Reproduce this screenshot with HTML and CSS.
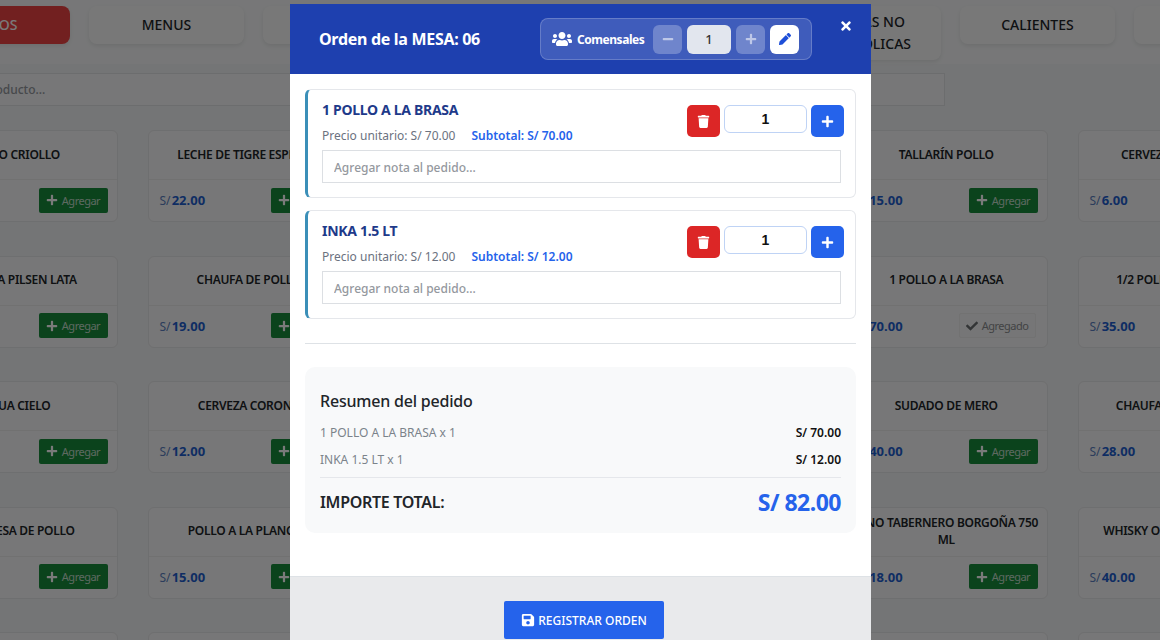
FILE: index.html
```html
<!DOCTYPE html>
<html lang="en">
<head>
    <meta charset="UTF-8">
    <meta name="viewport" content="width=device-width, initial-scale=1.0">
    <title>Orden de la mesa</title>
    <link rel="stylesheet" href="styles.css">
</head>
<body>
    <svg class="icon-defs" xmlns="http://www.w3.org/2000/svg">
        <symbol id="i-plus" viewBox="0 0 448 512"><path d="M416 208H272V64c0-17.67-14.33-32-32-32h-32c-17.67 0-32 14.33-32 32v144H32c-17.67 0-32 14.33-32 32v32c0 17.67 14.33 32 32 32h144v144c0 17.67 14.33 32 32 32h32c17.67 0 32-14.33 32-32V304h144c17.67 0 32-14.33 32-32v-32c0-17.67-14.33-32-32-32z"/></symbol>
        <symbol id="i-minus" viewBox="0 0 448 512"><path d="M416 208H32c-17.67 0-32 14.33-32 32v32c0 17.67 14.33 32 32 32h384c17.67 0 32-14.33 32-32v-32c0-17.67-14.33-32-32-32z"/></symbol>
        <symbol id="i-check" viewBox="0 0 512 512"><path d="M173.898 439.404l-166.400-166.400c-9.997-9.997-9.997-26.206 0-36.204l36.203-36.204c9.997-9.998 26.207-9.998 36.204 0L192 312.690 432.095 72.596c9.997-9.997 26.207-9.997 36.204 0l36.203 36.204c9.997 9.997 9.997 26.206 0 36.204l-294.400 294.401c-9.998 9.997-26.207 9.997-36.204-.001z"/></symbol>
        <symbol id="i-trash" viewBox="0 0 448 512"><path d="M432 32H312l-9.400-18.700A24 24 0 0 0 281.100 0H166.800a23.720 23.720 0 0 0-21.400 13.300L136 32H16A16 16 0 0 0 0 48v32a16 16 0 0 0 16 16h416a16 16 0 0 0 16-16V48a16 16 0 0 0-16-16zM53.200 467a48 48 0 0 0 47.900 45h245.800a48 48 0 0 0 47.900-45L416 128H32z"/></symbol>
        <symbol id="i-times" viewBox="0 0 352 512"><path d="M242.720 256l100.070-100.070c12.280-12.280 12.280-32.190 0-44.480l-22.240-22.240c-12.280-12.280-32.190-12.280-44.480 0L176 189.280 75.930 89.210c-12.280-12.280-32.190-12.280-44.480 0L9.210 111.450c-12.280 12.280-12.280 32.190 0 44.480L109.280 256 9.210 356.070c-12.280 12.280-12.280 32.190 0 44.480l22.240 22.240c12.280 12.280 32.200 12.280 44.480 0L176 322.720l100.070 100.070c12.280 12.280 32.200 12.280 44.480 0l22.240-22.240c12.280-12.280 12.280-32.190 0-44.480L242.720 256z"/></symbol>
        <symbol id="i-pencil" viewBox="0 0 512 512"><path d="M497.900 142.100l-46.100 46.100c-4.700 4.700-12.300 4.700-17 0l-111-111c-4.700-4.700-4.700-12.300 0-17l46.100-46.100c18.700-18.700 49.100-18.700 67.900 0l60.100 60.100c18.800 18.700 18.800 49.100 0 67.900zM284.200 99.800L21.600 362.400.4 483.900c-2.900 16.400 11.400 30.600 27.800 27.800l121.500-21.300 262.600-262.600c4.700-4.700 4.700-12.300 0-17l-111-111c-4.800-4.700-12.400-4.700-17.100 0z"/></symbol>
        <symbol id="i-save" viewBox="0 0 448 512"><path d="M433.941 129.941l-83.882-83.882A48 48 0 0 0 316.118 32H48C21.490 32 0 53.490 0 80v352c0 26.510 21.490 48 48 48h352c26.510 0 48-21.490 48-48V163.882a48 48 0 0 0-14.059-33.941zM224 416c-35.346 0-64-28.654-64-64 0-35.346 28.654-64 64-64s64 28.654 64 64c0 35.346-28.654 64-64 64zm96-304.520V212c0 6.627-5.373 12-12 12H76c-6.627 0-12-5.373-12-12V108c0-6.627 5.373-12 12-12h228.520c3.183 0 6.235 1.264 8.485 3.515l3.480 3.480A11.996 11.996 0 0 1 320 111.480z"/></symbol>
        <symbol id="i-users" viewBox="0 0 640 512"><path d="M96 224c35.300 0 64-28.700 64-64s-28.700-64-64-64-64 28.700-64 64 28.700 64 64 64zm448 0c35.300 0 64-28.700 64-64s-28.700-64-64-64-64 28.700-64 64 28.700 64 64 64zm32 32h-64c-17.600 0-33.500 7.100-45.100 18.600 40.300 22.100 68.900 62 75.100 109.400h66c17.700 0 32-14.300 32-32v-32c0-35.300-28.700-64-64-64zm-256 0c61.900 0 112-50.100 112-112S381.900 32 320 32 208 82.100 208 144s50.100 112 112 112zm76.800 32h-8.300c-20.800 10-43.900 16-68.500 16s-47.600-6-68.500-16h-8.300C179.600 288 128 339.600 128 403.200V432c0 26.500 21.500 48 48 48h288c26.500 0 48-21.500 48-48v-28.800c0-63.600-51.600-115.200-115.200-115.200zm-223.700-13.400C161.500 263.100 145.600 256 128 256H64c-35.300 0-64 28.700-64 64v32c0 17.700 14.300 32 32 32h65.900c6.300-47.400 34.900-87.300 75.200-109.400z"/></symbol>
    </svg>

    <!-- Pantalla de productos, detras del modal -->
    <div class="page">
        <div class="tabs">
            <button class="tab tab-active">PLATOS</button>
            <button class="tab">MENUS</button>
            <button class="tab">ENTRADAS</button>
            <button class="tab">BEBIDAS</button>
            <button class="tab">CERVEZAS</button>
            <button class="tab">BEBIDAS NO ALCOHOLICAS</button>
            <button class="tab">CALIENTES</button>
            <button class="tab">POSTRES</button>
        </div>

        <div class="search-row">
            <input class="search" type="text" placeholder="Buscar producto...">
        </div>

        <div class="grid">
            <div class="card"><div class="card-name">LOMO CRIOLLO</div><div class="card-foot"><span class="price">S/ <b>25.00</b></span><button class="add"><svg class="ic"><use href="#i-plus"/></svg>Agregar</button></div></div>
            <div class="card"><div class="card-name">LECHE DE TIGRE ESPECIAL</div><div class="card-foot"><span class="price">S/ <b>22.00</b></span><button class="add"><svg class="ic"><use href="#i-plus"/></svg>Agregar</button></div></div>
            <div class="card"><div class="card-name">ARROZ CON POLLO</div><div class="card-foot"><span class="price">S/ <b>18.00</b></span><button class="add"><svg class="ic"><use href="#i-plus"/></svg>Agregar</button></div></div>
            <div class="card"><div class="card-name">CEVICHE MIXTO</div><div class="card-foot"><span class="price">S/ <b>30.00</b></span><button class="add"><svg class="ic"><use href="#i-plus"/></svg>Agregar</button></div></div>
            <div class="card"><div class="card-name">TALLARÍN POLLO</div><div class="card-foot"><span class="price">S/ <b>15.00</b></span><button class="add"><svg class="ic"><use href="#i-plus"/></svg>Agregar</button></div></div>
            <div class="card"><div class="card-name">CERVEZA CUSQUEÑA</div><div class="card-foot"><span class="price">S/ <b>6.00</b></span><button class="add"><svg class="ic"><use href="#i-plus"/></svg>Agregar</button></div></div>

            <div class="card"><div class="card-name">CERVEZA PILSEN LATA</div><div class="card-foot"><span class="price">S/ <b>7.00</b></span><button class="add"><svg class="ic"><use href="#i-plus"/></svg>Agregar</button></div></div>
            <div class="card"><div class="card-name">CHAUFA DE POLLO</div><div class="card-foot"><span class="price">S/ <b>19.00</b></span><button class="add"><svg class="ic"><use href="#i-plus"/></svg>Agregar</button></div></div>
            <div class="card"><div class="card-name">INKA 1.5 LT</div><div class="card-foot"><span class="price">S/ <b>12.00</b></span><button class="add add-done"><svg class="ic"><use href="#i-check"/></svg>Agregado</button></div></div>
            <div class="card"><div class="card-name">LOMO SALTADO</div><div class="card-foot"><span class="price">S/ <b>24.00</b></span><button class="add"><svg class="ic"><use href="#i-plus"/></svg>Agregar</button></div></div>
            <div class="card"><div class="card-name">1 POLLO A LA BRASA</div><div class="card-foot"><span class="price">S/ <b>70.00</b></span><button class="add add-done"><svg class="ic"><use href="#i-check"/></svg>Agregado</button></div></div>
            <div class="card"><div class="card-name">1/2 POLLO A LA BRASA</div><div class="card-foot"><span class="price">S/ <b>35.00</b></span><button class="add"><svg class="ic"><use href="#i-plus"/></svg>Agregar</button></div></div>

            <div class="card"><div class="card-name">AGUA CIELO</div><div class="card-foot"><span class="price">S/ <b>3.00</b></span><button class="add"><svg class="ic"><use href="#i-plus"/></svg>Agregar</button></div></div>
            <div class="card"><div class="card-name">CERVEZA CORONA</div><div class="card-foot"><span class="price">S/ <b>12.00</b></span><button class="add"><svg class="ic"><use href="#i-plus"/></svg>Agregar</button></div></div>
            <div class="card"><div class="card-name">PARIHUELA</div><div class="card-foot"><span class="price">S/ <b>45.00</b></span><button class="add"><svg class="ic"><use href="#i-plus"/></svg>Agregar</button></div></div>
            <div class="card"><div class="card-name">CHICHA MORADA</div><div class="card-foot"><span class="price">S/ <b>10.00</b></span><button class="add"><svg class="ic"><use href="#i-plus"/></svg>Agregar</button></div></div>
            <div class="card"><div class="card-name">SUDADO DE MERO</div><div class="card-foot"><span class="price">S/ <b>40.00</b></span><button class="add"><svg class="ic"><use href="#i-plus"/></svg>Agregar</button></div></div>
            <div class="card"><div class="card-name">CHAUFA DE MARISCOS</div><div class="card-foot"><span class="price">S/ <b>28.00</b></span><button class="add"><svg class="ic"><use href="#i-plus"/></svg>Agregar</button></div></div>

            <div class="card"><div class="card-name">MILANESA DE POLLO</div><div class="card-foot"><span class="price">S/ <b>20.00</b></span><button class="add"><svg class="ic"><use href="#i-plus"/></svg>Agregar</button></div></div>
            <div class="card"><div class="card-name">POLLO A LA PLANCHA</div><div class="card-foot"><span class="price">S/ <b>15.00</b></span><button class="add"><svg class="ic"><use href="#i-plus"/></svg>Agregar</button></div></div>
            <div class="card"><div class="card-name">PAPA A LA HUANCAINA</div><div class="card-foot"><span class="price">S/ <b>12.00</b></span><button class="add"><svg class="ic"><use href="#i-plus"/></svg>Agregar</button></div></div>
            <div class="card"><div class="card-name">SOPA CRIOLLA</div><div class="card-foot"><span class="price">S/ <b>14.00</b></span><button class="add"><svg class="ic"><use href="#i-plus"/></svg>Agregar</button></div></div>
            <div class="card"><div class="card-name card-name-wide">VINO TABERNERO BORGOÑA 750 ML</div><div class="card-foot"><span class="price">S/ <b>18.00</b></span><button class="add"><svg class="ic"><use href="#i-plus"/></svg>Agregar</button></div></div>
            <div class="card"><div class="card-name">WHISKY OLD TIMES 750 ML</div><div class="card-foot"><span class="price">S/ <b>40.00</b></span><button class="add"><svg class="ic"><use href="#i-plus"/></svg>Agregar</button></div></div>

            <div class="card"></div><div class="card"></div><div class="card"></div><div class="card"></div><div class="card"></div><div class="card"></div>
        </div>
    </div>

    <!-- Modal de la orden -->
    <div class="overlay">
        <div class="modal">
            <div class="modal-head">
                <h5 class="modal-title">Orden de la MESA: 06</h5>
                <div class="guests">
                    <svg class="guests-icon"><use href="#i-users"/></svg>
                    <span class="guests-label">Comensales</span>
                    <button class="guest-btn guest-dim"><svg class="ic"><use href="#i-minus"/></svg></button>
                    <span class="guest-count">1</span>
                    <button class="guest-btn guest-dim"><svg class="ic"><use href="#i-plus"/></svg></button>
                    <button class="guest-btn guest-edit"><svg class="ic"><use href="#i-pencil"/></svg></button>
                </div>
                <button class="close-btn"><svg class="ic"><use href="#i-times"/></svg></button>
            </div>

            <div class="modal-body">
                <div class="item">
                    <div class="item-top">
                        <div class="item-info">
                            <div class="item-name">1 POLLO A LA BRASA</div>
                            <div class="item-prices">
                                <span>Precio unitario: S/ 70.00</span>
                                <span class="subtotal">Subtotal: S/ 70.00</span>
                            </div>
                        </div>
                        <div class="qty">
                            <button class="qty-btn qty-del"><svg class="ic"><use href="#i-trash"/></svg></button>
                            <input class="qty-input" type="text" value="1">
                            <button class="qty-btn qty-add"><svg class="ic"><use href="#i-plus"/></svg></button>
                        </div>
                    </div>
                    <input class="note" type="text" placeholder="Agregar nota al pedido...">
                </div>

                <div class="item">
                    <div class="item-top">
                        <div class="item-info">
                            <div class="item-name">INKA 1.5 LT</div>
                            <div class="item-prices">
                                <span>Precio unitario: S/ 12.00</span>
                                <span class="subtotal">Subtotal: S/ 12.00</span>
                            </div>
                        </div>
                        <div class="qty">
                            <button class="qty-btn qty-del"><svg class="ic"><use href="#i-trash"/></svg></button>
                            <input class="qty-input" type="text" value="1">
                            <button class="qty-btn qty-add"><svg class="ic"><use href="#i-plus"/></svg></button>
                        </div>
                    </div>
                    <input class="note" type="text" placeholder="Agregar nota al pedido...">
                </div>

                <hr class="divider">

                <div class="summary">
                    <h5 class="summary-title">Resumen del pedido</h5>
                    <div class="summary-row"><span>1 POLLO A LA BRASA x 1</span><b>S/ 70.00</b></div>
                    <div class="summary-row"><span>INKA 1.5 LT x 1</span><b>S/ 12.00</b></div>
                    <div class="summary-total"><span>IMPORTE TOTAL:</span><b>S/ 82.00</b></div>
                </div>
            </div>

            <div class="modal-foot">
                <button class="save-btn"><svg class="ic"><use href="#i-save"/></svg>REGISTRAR ORDEN</button>
            </div>
        </div>
    </div>
</body>
</html>
```

FILE: styles.css
```css
/* Base */
* {
    box-sizing: border-box;
}
html, body {
    height: 100%;
}
body {
    margin: 0;
    overflow: hidden;
    background: #f3f4f6;
    font-family: "Noto Sans", Arial, sans-serif;
    color: #212529;
}
button {
    font-family: inherit;
    border: none;
    cursor: pointer;
}
.icon-defs {
    display: none;
}
.ic {
    width: 1em;
    height: 1em;
    fill: currentColor;
    display: block;
}

/* Pagina de productos */
.page {
    height: 100%;
    overflow: hidden;
}
.tabs {
    display: flex;
    align-items: flex-start;
    gap: 19.2px;
    height: 64px;
    padding: 6px 0 0;
    margin-left: -85.2px;
    background: #f8f9fa;
}
.tab {
    flex: 0 0 155px;
    min-height: 38px;
    padding: 5px 10px;
    border-radius: 8px;
    background: #fbfbfb;
    font-size: 14px;
    font-weight: 500;
    line-height: 22px;
    color: #212529;
    box-shadow: 0 2px 4px rgba(0,0,0,0.08);
}
.tab-active {
    background: #ef4444;
    color: #fff;
}
.search-row {
    padding-top: 9px;
    margin-left: -72px;
}
.search {
    display: block;
    width: 1017px;
    height: 33px;
    padding: 0 12px;
    border: 1px solid #e2e4e7;
    background: #f8f9fa;
    font-family: inherit;
    font-size: 12px;
}
.grid {
    display: grid;
    grid-template-columns: repeat(6, 202.5px);
    grid-auto-rows: 92px;
    column-gap: 30px;
    row-gap: 33.5px;
    margin: 24px 0 0 -85px;
}
.card {
    display: flex;
    flex-direction: column;
    border: 1px solid #e7e8ea;
    border-radius: 6px;
    background: #f8f9fa;
}
.card-name {
    flex: 1;
    display: flex;
    align-items: center;
    justify-content: center;
    padding: 0 10px 2px;
    text-align: center;
    font-size: 12px;
    font-weight: 600;
    line-height: 17px;
    letter-spacing: -0.3px;
}
.card-name-wide {
    padding: 0 4px 2px;
}
.card-foot {
    display: flex;
    align-items: center;
    justify-content: space-between;
    height: 42px;
    padding: 0 9px 1px 11px;
    border-top: 1px solid #eceded;
}
.price {
    font-size: 12px;
    color: #5b7fc0;
}
.price b {
    margin-left: -2px;
    color: #1f5fd0;
    font-size: 13px;
    font-weight: 700;
}
.add {
    display: flex;
    align-items: center;
    justify-content: center;
    gap: 4px;
    width: 69px;
    height: 25px;
    padding: 0;
    border-radius: 2px;
    background: #178c3c;
    color: #c4dccb;
    font-size: 11px;
    letter-spacing: -0.5px;
}
.add .ic {
    font-size: 12px;
    color: #fff;
}
.add-done {
    width: 77px;
    margin-right: 2px;
    background: #f6f7f8;
    border: 1px solid #eeeeee;
    color: #8b8d90;
}
.add-done .ic {
    color: #6c6f72;
}

/* Modal */
.overlay {
    position: fixed;
    inset: 0;
    display: flex;
    justify-content: center;
    align-items: flex-start;
    padding: 4px 0 0 1px;
    background: rgba(0,0,0,0.52);
}
.modal {
    width: 581px;
    flex: none;
    background: #fff;
}
.modal-head {
    position: relative;
    display: flex;
    align-items: center;
    justify-content: space-between;
    height: 70px;
    padding: 0 59px 0 29px;
    background: #1e40af;
    color: #fff;
}
.modal-title {
    margin: 0;
    font-size: 16px;
    font-weight: 700;
    letter-spacing: -0.3px;
}
.guests {
    display: flex;
    align-items: center;
    width: 272px;
    height: 42px;
    padding: 0 11px;
    border: 1px solid rgba(255,255,255,0.2);
    border-radius: 8px;
    background: rgba(255,255,255,0.15);
}
.guests-icon {
    width: 20px;
    height: 16px;
    fill: #fff;
    margin-right: 5px;
}
.guests-label {
    width: 76px;
    font-size: 12px;
    font-weight: 700;
    letter-spacing: -0.45px;
}
.guest-btn {
    display: flex;
    align-items: center;
    justify-content: center;
    width: 29px;
    height: 29px;
    padding: 0;
    border-radius: 6px;
    font-size: 12px;
}
.guest-dim {
    background: rgba(255,255,255,0.25);
    color: rgba(255,255,255,0.55);
}
.guest-edit {
    margin-left: 5px;
    background: #fff;
    color: #1d4ed8;
}
.guest-count {
    width: 44px;
    height: 29px;
    margin: 0 5px;
    border-radius: 6px;
    background: #e2e6ee;
    color: #333;
    font-size: 13px;
    font-weight: 500;
    line-height: 29px;
    text-align: center;
}
.close-btn {
    position: absolute;
    top: 15px;
    right: 18px;
    padding: 0;
    background: none;
    color: #fff;
    font-size: 14px;
}
.modal-body {
    height: 502px;
    padding: 15px 15px 0;
}
.item {
    height: 109px;
    margin-bottom: 12px;
    padding: 10px 14px 0 14px;
    border: 1px solid #e5e7eb;
    border-left: 3px solid #3b8fb8;
    border-radius: 6px;
    background: #fff;
}
.item-top {
    display: flex;
    justify-content: space-between;
    height: 50px;
}
.item-name {
    font-size: 14px;
    font-weight: 700;
    line-height: 20px;
    letter-spacing: -0.3px;
    color: #1e3a8a;
}
.item-prices {
    display: flex;
    gap: 16px;
    margin-top: 7px;
    font-size: 12px;
    line-height: 18px;
    color: #6b7280;
}
.subtotal {
    color: #2563eb;
    font-weight: 600;
}
.qty {
    display: flex;
    align-items: flex-start;
    gap: 4px;
    margin: 5px -3px 0 0;
}
.qty-btn {
    display: flex;
    align-items: center;
    justify-content: center;
    width: 33px;
    height: 32px;
    padding: 0;
    border-radius: 5px;
    color: #fff;
    font-size: 13px;
}
.qty-del {
    background: #dc2626;
}
.qty-add {
    background: #2563eb;
}
.qty-input {
    width: 83px;
    height: 28px;
    border: 1px solid #bfd3f5;
    border-radius: 6px;
    background: #fff;
    text-align: center;
    font-family: "Liberation Sans", Arial, sans-serif;
    font-size: 14px;
    font-weight: 700;
    color: #111;
}
.note {
    display: block;
    width: 519px;
    height: 33px;
    padding: 2px 11px 0;
    border: 1px solid #dcdfe3;
    background: #fff;
    font-family: inherit;
    font-size: 12px;
}
.note::placeholder, .search::placeholder {
    color: #94989e;
    font-weight: 500;
}
.divider {
    margin: 24px 0 23px;
    border: none;
    border-top: 1px solid #dee2e6;
}
.summary {
    height: 166px;
    padding: 22px 15px 0;
    border-radius: 10px;
    background: #f8f9fa;
}
.summary-title {
    margin: 0 0 6px;
    font-size: 16px;
    font-weight: 500;
    line-height: 24px;
    letter-spacing: -0.2px;
    color: #212529;
}
.summary-row {
    display: flex;
    justify-content: space-between;
    height: 27px;
    font-size: 12px;
    line-height: 27px;
    color: #7b838a;
}
.summary-row b {
    color: #111;
    font-weight: 600;
}
.summary-total {
    display: flex;
    justify-content: space-between;
    align-items: center;
    height: 48px;
    margin-top: 4px;
    border-top: 1px solid #e5e7eb;
    font-size: 16px;
    font-weight: 600;
    letter-spacing: -0.3px;
}
.summary-total b {
    font-size: 23px;
    font-weight: 700;
    letter-spacing: -0.5px;
    color: #2563eb;
}
.modal-foot {
    display: flex;
    justify-content: center;
    height: 70px;
    padding: 24px 0 0 7px;
    border-top: 1px solid #dee2e6;
    background: #e9eaec;
}
.save-btn {
    display: flex;
    align-items: center;
    justify-content: center;
    gap: 3px;
    width: 160px;
    height: 38px;
    padding: 0;
    border-radius: 2px;
    background: #2563eb;
    color: #fff;
    font-size: 12px;
    font-weight: 500;
}
.save-btn .ic {
    font-size: 14px;
}
```
